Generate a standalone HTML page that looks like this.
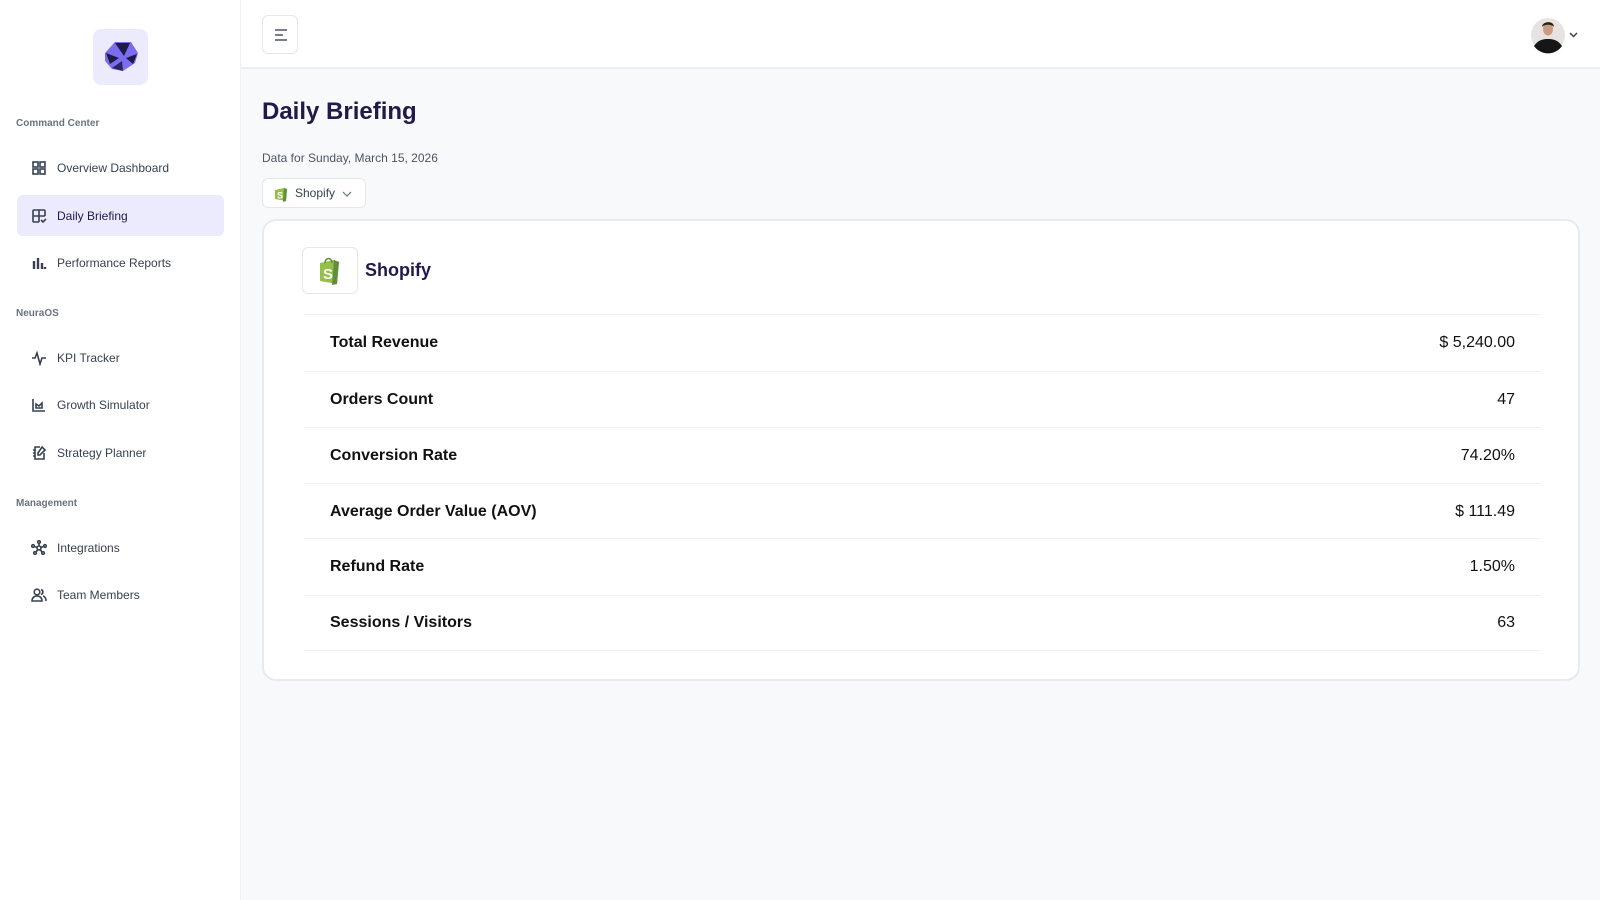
<!DOCTYPE html>
<html><head><meta charset="utf-8"><style>
*{box-sizing:border-box;margin:0;padding:0}
body{width:1600px;height:900px;overflow:hidden;font-family:"Liberation Sans",sans-serif;background:#f8f9fb;position:relative;color:#111}
.side{position:absolute;left:0;top:0;width:241px;height:900px;background:#fff;border-right:1px solid #eef0f3}
.logo{position:absolute;left:93px;top:29px;width:55px;height:56px;background:#ecebfd;border-radius:8px}
.sec{position:absolute;left:16px;font-size:10px;color:#6b7280;font-weight:bold}
.item{position:absolute;left:17px;width:207px;height:41px;font-size:12px;color:#374151;display:flex;align-items:center;padding-left:14px;border-radius:6px}
.item svg{width:16px;height:16px;margin-right:10px;stroke:#374151;fill:none;stroke-width:1.6}
.item.act{background:#ecebfd;color:#1e1b4b}
.top{position:absolute;left:241px;top:0;right:0;height:69px;background:#fff;border-bottom:2px solid #eceef1}
.ham{position:absolute;left:21px;top:15px;width:36px;height:39px;border:1px solid #e5e7eb;border-radius:6px;background:#fff}
h1{position:absolute;left:262px;top:98px;font-size:24px;color:#1e1b4b;font-weight:bold}
.date{position:absolute;left:262px;top:151px;font-size:12px;color:#4b5563}
.dd{position:absolute;left:262px;top:178px;width:104px;height:30px;background:#fff;border:1px solid #e5e7eb;border-radius:6px;font-size:12px;color:#374151;display:flex;align-items:center;padding-left:32px}
.card{position:absolute;left:262px;top:219px;width:1318px;height:462px;background:#fff;border:2px solid #e8eaee;border-radius:14px}
.sb{position:absolute;left:38px;top:26px;width:56px;height:47px;border:1px solid #e5e7eb;border-radius:6px;display:flex;align-items:center;justify-content:center}
.st{position:absolute;left:101px;top:39px;font-size:18px;color:#1e1b4b;font-weight:bold}
.row{position:absolute;left:40px;width:1237px;height:56px;border-top:1px solid #f0f1f3;display:flex;align-items:center;justify-content:space-between;padding:0 26px 0 26px}
.row b{font-size:16px}
.row span{font-size:16px}
</style></head><body>
<div class="side">
<div class="logo"><svg width="55" height="56" viewBox="0 0 55 56"><polygon points="12,24 22,13 38,13 45,24 42,34 30,42 19,40 12,32" fill="#7c6cf0"/><polygon points="22,14 37,14 31,27" fill="#1e1b4b"/><polygon points="13,24 26,29 17,35" fill="#1e1b4b"/><polygon points="33,29 44,25 40,35" fill="#1e1b4b"/><polygon points="19,39 29,32 30,42" fill="#2a2560"/></svg></div>
<div class="sec" style="top:118px">Command Center</div>
<div class="item" style="top:147px"><svg viewBox="0 0 16 16"><rect x="2" y="2" width="5" height="5"/><rect x="9" y="2" width="5" height="5"/><rect x="2" y="9" width="5" height="5"/><rect x="9" y="9" width="5" height="5"/></svg>Overview Dashboard</div>
<div class="item act" style="top:195px"><svg viewBox="0 0 16 16"><path d="M14 8V3a1 1 0 0 0-1-1H3a1 1 0 0 0-1 1v10a1 1 0 0 0 1 1h5M2 8h12M8 2v12M10 12l2 2 3-3"/></svg>Daily Briefing</div>
<div class="item" style="top:242px"><svg viewBox="0 0 16 16"><path d="M3 14V6M7 14V3M11 14V8M14 14v-2" stroke-width="2.4"/></svg>Performance Reports</div>
<div class="sec" style="top:308px">NeuraOS</div>
<div class="item" style="top:337px"><svg viewBox="0 0 16 16"><path d="M1 8h3l2-5 3 11 2-6h4"/></svg>KPI Tracker</div>
<div class="item" style="top:384px"><svg viewBox="0 0 16 16"><path d="M2 2v12h12M5 11V7l3 2 3-3v5z"/></svg>Growth Simulator</div>
<div class="item" style="top:432px"><svg viewBox="0 0 16 16"><path d="M9 2H4v12h9V8M11 2l3 3-5 5H7V8zM2 5h2M2 8h2M2 11h2"/></svg>Strategy Planner</div>
<div class="sec" style="top:498px">Management</div>
<div class="item" style="top:527px"><svg viewBox="0 0 16 16"><circle cx="8" cy="8" r="2"/><circle cx="8" cy="2" r="1.3"/><circle cx="2" cy="6" r="1.3"/><circle cx="14" cy="6" r="1.3"/><circle cx="4" cy="13" r="1.3"/><circle cx="12" cy="13" r="1.3"/><path d="M8 3.3V6M3.2 6.5 6 7.4M12.8 6.5 10 7.4M5 12l1.8-2.4M11 12 9.2 9.6"/></svg>Integrations</div>
<div class="item" style="top:574px"><svg viewBox="0 0 16 16"><circle cx="6" cy="5" r="2.8"/><path d="M1 14c0-3 2-5 5-5s5 2 5 5zM10 2.5a2.6 2.6 0 0 1 0 5M12 9c2 .6 3 2.5 3 5"/></svg>Team Members</div>
</div>
<div class="top"><div class="ham"><svg width="36" height="39" viewBox="0 0 36 39"><path d="M12 14h12M12 19h8M12 24h12" stroke="#4b5563" stroke-width="1.5"/></svg></div>
<svg style="position:absolute;left:1289px;top:16px" width="66" height="38" viewBox="0 0 66 38"><circle cx="18" cy="19" r="17" fill="#e7e3e0"/><path d="M4 30c4-6 9-7 14-7s10 1 14 7a17 17 0 0 1-28 0z" fill="#161616"/><ellipse cx="18" cy="13" rx="5" ry="6.5" fill="#c99b80"/><path d="M12 11c0-6 12-7 12 0-2-3-10-3-12 0z" fill="#2b211c"/><path d="M40 17l3.5 3.5L47 17" stroke="#374151" stroke-width="1.5" fill="none"/></svg>
</div>
<h1>Daily Briefing</h1>
<div class="date">Data for Sunday, March 15, 2026</div>
<div class="dd"><svg style="position:absolute;left:11px;top:7px" width="14" height="16" viewBox="0 0 14 16"><path d="M1 4l9-2 3 1-1 12-11-2z" fill="#95bf47"/><path d="M10 2l3 1-1 12-3 1z" fill="#5e8e3e"/><text x="3" y="12.5" font-size="9" font-weight="bold" fill="#fff" font-family="Liberation Sans">S</text></svg>Shopify<svg style="position:absolute;left:79px;top:11px" width="10" height="8" viewBox="0 0 10 8"><path d="M1 2l4 4 4-4" stroke="#6b7280" stroke-width="1.2" fill="none"/></svg></div>
<div class="card">
<div class="sb"><svg width="24" height="30" viewBox="0 0 24 30"><path d="M2 7l14-3 5 2-2 22-17-3z" fill="#95bf47"/><path d="M16 4l5 2-2 22-5 1z" fill="#5e8e3e"/><path d="M7 7c0-6 7-6 7 0" stroke="#5e8e3e" stroke-width="1.5" fill="none"/><text x="5" y="23" font-size="15" font-weight="bold" fill="#fff" font-family="Liberation Sans">S</text></svg></div>
<div class="st">Shopify</div>
<div class="row" style="top:93px"><b>Total Revenue</b><span>$ 5,240.00</span></div>
<div class="row" style="top:150px"><b>Orders Count</b><span>47</span></div>
<div class="row" style="top:206px"><b>Conversion Rate</b><span>74.20%</span></div>
<div class="row" style="top:262px"><b>Average Order Value (AOV)</b><span>$ 111.49</span></div>
<div class="row" style="top:317px"><b>Refund Rate</b><span>1.50%</span></div>
<div class="row" style="top:374px;border-bottom:1px solid #f0f1f3"><b>Sessions / Visitors</b><span>63</span></div>
</div>
</body></html>
